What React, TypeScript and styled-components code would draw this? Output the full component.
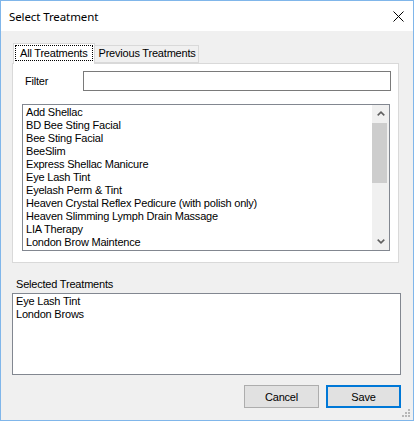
import React from "react";
import styled, { createGlobalStyle } from "styled-components";

const Global = createGlobalStyle`
  html, body { margin: 0; padding: 0; background: #ffffff; }
  body { font-family: "Liberation Sans", Arial, sans-serif; font-size: 11px; letter-spacing: -0.2px; color: #000; }
  * { box-sizing: border-box; }
`;

const Window = styled.div`
  position: relative;
  width: 414px;
  height: 421px;
  border: 1px solid #80b6ea;
  display: flex;
  flex-direction: column;
  background: #f0f0f0;
  overflow: hidden;
`;

const TitleBar = styled.div`
  height: 30px;
  flex: none;
  background: #ffffff;
  display: flex;
  align-items: center;
  justify-content: space-between;
  padding: 0 9px 0 8px;
`;

const TitleText = styled.span`
  font-family: "Noto Sans", "Liberation Sans", sans-serif;
  font-size: 11.5px;
  letter-spacing: -0.1px;
  color: #000;
`;

const CloseIcon = styled.svg`
  width: 11px;
  height: 11px;
  display: block;
`;

const Body = styled.div`
  flex: 1;
  display: flex;
  flex-direction: column;
  padding: 12px 12px 0 11px;
`;

const TabStrip = styled.div`
  display: flex;
  align-items: flex-end;
  height: 20px;
  padding-left: 1px;
  position: relative;
  z-index: 1;
`;

const Tab = styled.div<{ $active?: boolean }>`
  height: ${(p) => (p.$active ? "21px" : "18px")};
  margin-bottom: ${(p) => (p.$active ? "-1px" : "0")};
  padding: ${(p) => (p.$active ? "1px 1px 0" : "0 0 1px")};
  background: ${(p) => (p.$active ? "#ffffff" : "#f0f0f0")};
  border: 1px solid #d9d9d9;
  border-bottom: ${(p) => (p.$active ? "none" : "1px solid #d9d9d9")};
  margin-left: ${(p) => (p.$active ? "0" : "-1px")};
  display: flex;
  align-items: ${(p) => (p.$active ? "flex-start" : "flex-end")};
`;

const TabLabel = styled.span<{ $focused?: boolean }>`
  display: block;
  line-height: 14px;
  padding: ${(p) => (p.$focused ? "0 4px" : "0 1px 0 3px")};
  white-space: nowrap;
  border: 1px ${(p) => (p.$focused ? "dotted #000" : "solid transparent")};
`;

const Panel = styled.div`
  width: 387px;
  height: 200px;
  background: #ffffff;
  border: 1px solid #d9d9d9;
  padding: 7px 8px 0 9px;
  display: flex;
  flex-direction: column;
`;

const FilterRow = styled.div`
  display: flex;
  align-items: center;
  height: 20px;
`;

const FilterLabel = styled.label`
  width: 58px;
  margin-left: 3px;
  line-height: 13px;
`;

const TextInput = styled.div`
  flex: 1;
  height: 20px;
  margin-right: -1px;
  border: 1px solid #7a7a7a;
  background: #fff;
`;

const ListBox = styled.div<{ $height: number }>`
  height: ${(p) => p.$height}px;
  border: 1px solid #828790;
  background: #fff;
  display: flex;
`;

const TreatmentList = styled(ListBox)`
  margin-top: 13px;
`;

const Items = styled.div`
  flex: 1;
  padding: 1px 3px;
  overflow: hidden;
`;

const Item = styled.div`
  height: 13px;
  line-height: 13px;
  white-space: nowrap;
`;

const ScrollBar = styled.div`
  width: 17px;
  background: #f0f0f0;
  display: flex;
  flex-direction: column;
`;

const ArrowButton = styled.div`
  height: 17px;
  flex: none;
  display: flex;
  align-items: center;
  justify-content: center;
`;

const Track = styled.div`
  flex: 1;
  padding: 1px 1px 0 0;
`;

const Thumb = styled.div`
  width: 15px;
  background: #cdcdcd;
`;

const SectionLabel = styled.div`
  margin-top: 15px;
  margin-left: 4px;
  height: 13px;
  line-height: 13px;
  margin-bottom: 2px;
`;

const SelectedBox = styled(ListBox)`
  width: 389px;
`;

const ButtonRow = styled.div`
  display: flex;
  justify-content: flex-end;
  gap: 7px;
  margin-top: 10px;
  width: 389px;
`;

const Button = styled.button<{ $primary?: boolean }>`
  width: 75px;
  height: 23px;
  font-family: "Liberation Sans", Arial, sans-serif;
  font-size: 11px;
  letter-spacing: -0.2px;
  color: #000;
  background: #e1e1e1;
  border: ${(p) => (p.$primary ? "2px solid #0078d7" : "1px solid #adadad")};
  padding: 0;
  margin: 0;
`;

const Grip = styled.svg`
  position: absolute;
  right: 2px;
  bottom: 2px;
  width: 9px;
  height: 9px;
`;

const treatments = [
  "Add Shellac",
  "BD Bee Sting Facial",
  "Bee Sting Facial",
  "BeeSlim",
  "Express Shellac Manicure",
  "Eye Lash Tint",
  "Eyelash Perm & Tint",
  "Heaven Crystal Reflex Pedicure (with polish only)",
  "Heaven Slimming Lymph Drain Massage",
  "LIA Therapy",
  "London Brow Maintence",
];

const selected = ["Eye Lash Tint", "London Brows"];

const Chevron = ({ up }: { up?: boolean }) => (
  <svg width="8" height="5" viewBox="0 0 8 5">
    <path
      d={up ? "M0.7 4.3 L4 1.2 L7.3 4.3" : "M0.7 0.7 L4 3.8 L7.3 0.7"}
      fill="none"
      stroke="#606060"
      strokeWidth="1.6"
    />
  </svg>
);

export default function App() {
  return (
    <>
      <Global />
      <Window>
        <TitleBar>
          <TitleText>Select Treatment</TitleText>
          <CloseIcon viewBox="0 0 11 11">
            <path d="M0.5 0.5 L10.5 10.5 M10.5 0.5 L0.5 10.5" stroke="#000" strokeWidth="1" fill="none" />
          </CloseIcon>
        </TitleBar>
        <Body>
          <TabStrip>
            <Tab $active>
              <TabLabel $focused>All Treatments</TabLabel>
            </Tab>
            <Tab>
              <TabLabel>Previous Treatments</TabLabel>
            </Tab>
          </TabStrip>
          <Panel>
            <FilterRow>
              <FilterLabel>Filter</FilterLabel>
              <TextInput />
            </FilterRow>
            <TreatmentList $height={147}>
              <Items>
                {treatments.map((t) => (
                  <Item key={t}>{t}</Item>
                ))}
              </Items>
              <ScrollBar>
                <ArrowButton>
                  <Chevron up />
                </ArrowButton>
                <Track>
                  <Thumb style={{ height: 60 }} />
                </Track>
                <ArrowButton>
                  <Chevron />
                </ArrowButton>
              </ScrollBar>
            </TreatmentList>
          </Panel>
          <SectionLabel>Selected Treatments</SectionLabel>
          <SelectedBox $height={82}>
            <Items>
              {selected.map((t) => (
                <Item key={t}>{t}</Item>
              ))}
            </Items>
          </SelectedBox>
          <ButtonRow>
            <Button>Cancel</Button>
            <Button $primary>Save</Button>
          </ButtonRow>
        </Body>
        <Grip viewBox="0 0 9 9">
          <rect x="6" y="0" width="2" height="2" fill="#b8b8b8" />
          <rect x="3" y="3" width="2" height="2" fill="#b8b8b8" />
          <rect x="6" y="3" width="2" height="2" fill="#b8b8b8" />
          <rect x="0" y="6" width="2" height="2" fill="#b8b8b8" />
          <rect x="3" y="6" width="2" height="2" fill="#b8b8b8" />
          <rect x="6" y="6" width="2" height="2" fill="#b8b8b8" />
        </Grip>
      </Window>
    </>
  );
}
